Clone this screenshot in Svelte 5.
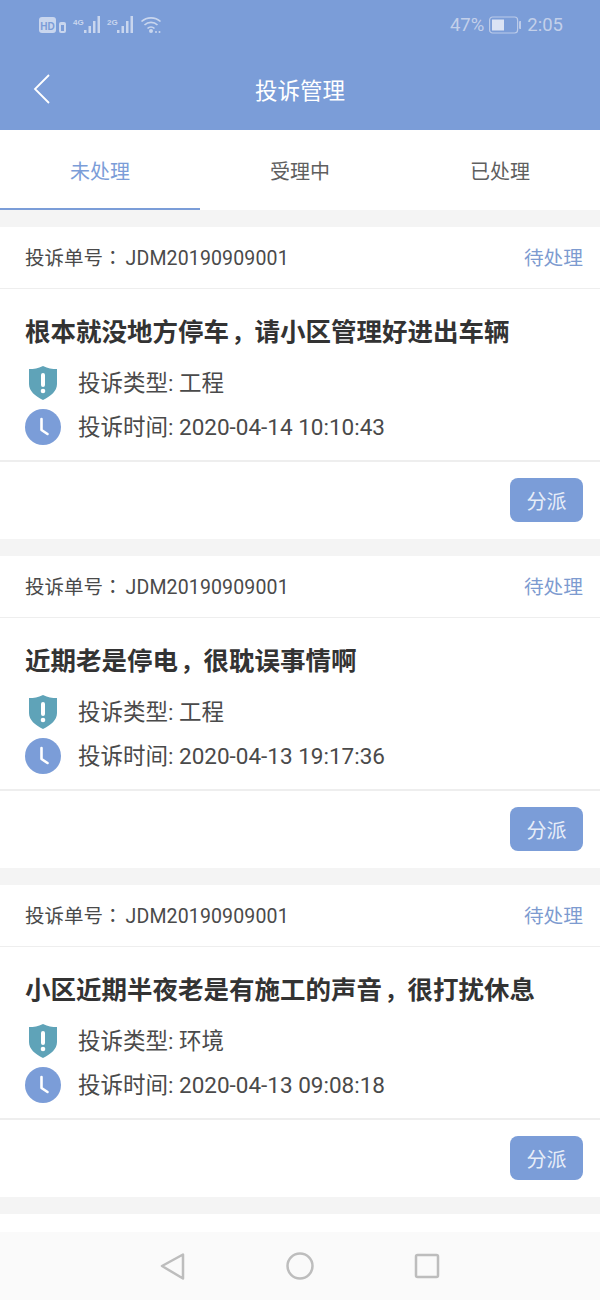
<script>
  const tabs = ['未处理', '受理中', '已处理'];
  const items = [
    { before: '根本就没地方停车', after: '请小区管理好进出车辆', type: '工程', time: '2020-04-14 10:10:43' },
    { before: '近期老是停电', after: '很耽误事情啊', type: '工程', time: '2020-04-13 19:17:36' },
    { before: '小区近期半夜老是有施工的声音', after: '很打扰休息', type: '环境', time: '2020-04-13 09:08:18' }
  ];
</script>

<div class="page">
  <header class="top">
    <div class="status">
      <svg class="sicons" width="125" height="24" viewBox="0 0 125 24">
        <rect x="0" y="4" width="17" height="16" rx="3" fill="#c9d6ee"/>
        <text x="8.500" y="16.500" class="hd" text-anchor="middle">HD</text>
        <rect x="20" y="9" width="7" height="11" rx="2" fill="#c9d6ee"/>
        <rect x="22" y="12" width="3" height="6" fill="#7b9dd8"/>
        <text x="34" y="11.500" class="g">4G</text>
        <text x="68" y="11.500" class="g">2G</text>
        <g fill="#c9d6ee">
          <rect x="45" y="17" width="2.500" height="3"/><rect x="49.500" y="13" width="2.500" height="7"/><rect x="54" y="8" width="2.500" height="12"/><rect x="58.500" y="3" width="2.500" height="17"/>
          <rect x="78" y="17" width="2.500" height="3"/><rect x="82.500" y="13" width="2.500" height="7"/><rect x="87" y="8" width="2.500" height="12"/><rect x="91.500" y="3" width="2.500" height="17"/>
          <circle cx="112" cy="18" r="2"/>
          <circle cx="117" cy="19" r="1"/><circle cx="120.500" cy="19" r="1"/>
        </g>
        <g fill="none" stroke="#c9d6ee" stroke-width="1.700">
          <path d="M102.500 8.500a14 14 0 0 1 19 0"/><path d="M105.500 12a9.500 9.500 0 0 1 13 0"/><path d="M108.500 15.500a5 5 0 0 1 7 0"/>
        </g>
      </svg>
      <div class="status-right">
        <span>47%</span>
        <svg class="batt" width="32" height="18" viewBox="0 0 32 18">
          <rect x="0.600" y="1" width="28" height="16" rx="3" fill="none" stroke="#bccbe9" stroke-width="1.200"/>
          <rect x="3" y="3.500" width="12" height="11" fill="#dbe3f4"/>
          <rect x="30" y="5" width="2.500" height="8" rx="1" fill="#bccbe9"/>
        </svg>
        <span>2:05</span>
      </div>
    </div>
    <div class="nav">
      <svg class="back" width="18" height="32" viewBox="0 0 18 32">
        <path d="M16 2 2 16l14 14" fill="none" stroke="#fff" stroke-width="1.800"/>
      </svg>
      <h1>投诉管理</h1>
    </div>
  </header>

  <div class="tabs">
    {#each tabs as t, i}
      <div class="tab" class:active={i === 0}>{t}</div>
    {/each}
  </div>

  {#each items as it}
    <section class="card">
      <div class="head">
        <span class="no">投诉单号<span class="colon">：</span><span class="code">JDM20190909001</span></span>
        <span class="state">待处理</span>
      </div>
      <div class="body">
        <h2>{it.before}<span class="comma">，</span>{it.after}</h2>
        <div class="row r1">
          <svg class="ico" width="36" height="36" viewBox="0 0 36 36">
            <path d="M18 1 C23 3.500 27 4 32 4 V19 C32 26 26 31 18 35 C10 31 4 26 4 19 V4 C9 4 13 3.500 18 1Z" fill="#5fa3b8"/>
            <rect x="16" y="8" width="4" height="14" rx="2" fill="#fff"/>
            <circle cx="18" cy="26" r="2.300" fill="#fff"/>
          </svg>
          <span>投诉类型: {it.type}</span>
        </div>
        <div class="row r2">
          <svg class="ico" width="36" height="36" viewBox="0 0 36 36">
            <circle cx="18" cy="18" r="18" fill="#7b9dd8"/>
            <path d="M16.500 10v11l6 4" fill="none" stroke="#fff" stroke-width="2.600" stroke-linecap="round" stroke-linejoin="round"/>
          </svg>
          <span>投诉时间: {it.time}</span>
        </div>
      </div>
      <div class="foot"><button>分派</button></div>
    </section>
  {/each}

  <div class="spacer"></div>
  <nav class="sysnav">
    <svg width="26" height="28" viewBox="0 0 26 28"><path d="M2 14 23 2.500v24Z" fill="none" stroke="#bdbdbd" stroke-width="2.500" stroke-linejoin="round"/></svg>
    <svg width="28" height="28" viewBox="0 0 28 28"><circle cx="14" cy="14" r="12.500" fill="none" stroke="#bdbdbd" stroke-width="2.500"/></svg>
    <svg width="26" height="26" viewBox="0 0 26 26"><rect x="2" y="2" width="22" height="22" rx="1.500" fill="none" stroke="#bdbdbd" stroke-width="2.500"/></svg>
  </nav>
</div>

<style>
  :global(body) { margin: 0; background: #fff; }
  .page {
    width: 600px;
    height: 1300px;
    overflow: hidden;
    font-family: Roboto, "Noto Sans CJK SC", "Liberation Sans", sans-serif;
    color: #333;
    background: #f4f4f4;
    display: flex;
    flex-direction: column;
  }
  .colon { font-family: "Noto Sans CJK TC", sans-serif; margin-right: 3px; }
  .code { letter-spacing: 0.15px; }
  .comma { font-size: 0.9em; padding-left: 0.111em; }
  .top { height: 130px; background: #7b9dd8; flex: none; }
  .status {
    height: 50px;
    display: flex;
    justify-content: space-between;
    align-items: center;
    padding: 0 37px 0 39px;
    color: #c3d0ea;
  }
  .hd { font: 700 10px "Liberation Sans", sans-serif; fill: #7b9dd8; }
  .g { font: 700 8px "Liberation Sans", sans-serif; fill: #c9d6ee; }
  .status-right {
    display: flex;
    align-items: center;
    font: 18.500px Roboto, sans-serif;
    color: #c3d0ea;
  }
  .batt { margin: 0 6px 0 5px; }
  .nav {
    position: relative;
    height: 80px;
    box-sizing: border-box;
    padding-top: 4px;
    display: flex;
    align-items: center;
    justify-content: center;
    margin-top: -1px;
  }
  .back { position: absolute; left: 33px; top: 24px; }
  h1 { margin: 0; font-size: 22.500px; font-weight: 400; color: #fff; line-height: 1; }
  .tabs { height: 80px; display: flex; background: #fff; flex: none; }
  .tab {
    flex: 1;
    display: flex;
    align-items: center;
    justify-content: center;
    font-size: 20px;
    color: #5f5f5f;
    border-bottom: 2px solid transparent;
    box-sizing: border-box;
    padding-top: 2px;
  }
  .tab.active { color: #7b9dd8; border-bottom-color: #7b9dd8; }
  .card { background: #fff; margin-top: 17px; height: 312px; flex: none; display: flex; flex-direction: column; }
  .head {
    height: 62px;
    box-sizing: border-box;
    border-bottom: 1px solid #eee;
    display: flex;
    align-items: center;
    justify-content: space-between;
    padding: 1px 17px 0 25px;
    font-size: 19.500px;
    color: #4a4a4a;
    line-height: 1;
  }
  .state { color: #7d9bd0; font-size: 19.700px; margin-top: 1px; }
  .body { height: 173px; box-sizing: border-box; border-bottom: 2px solid #eee; padding: 0 25px; }
  h2 { margin: 0; padding-top: 25px; height: 36px; font-size: 25.500px; line-height: 36px; font-weight: 700; color: #333; white-space: nowrap; }
  .row { display: flex; align-items: center; gap: 17px; height: 36px; font-size: 22.500px; line-height: 1; color: #4a4a4a; white-space: nowrap; }
  .r1 { margin-top: 15px; }
  .r2 { margin-top: 8px; }
  .ico { flex: none; }
  .foot { flex: 1; display: flex; justify-content: flex-end; align-items: flex-start; padding: 16px 17px 0 0; }
  button {
    width: 73px;
    height: 44px;
    border: 0;
    border-radius: 8px;
    background: #7b9dd8;
    color: #e8eef9;
    font: 20px "Noto Sans CJK SC", sans-serif;
    padding: 0;
  }
  .spacer { height: 18px; flex: none; margin-top: 17px; background: #fff; }
  .sysnav {
    flex: 1;
    background: #fafafa;
    display: flex;
    align-items: center;
    justify-content: center;
    gap: 100px;
  }
</style>
